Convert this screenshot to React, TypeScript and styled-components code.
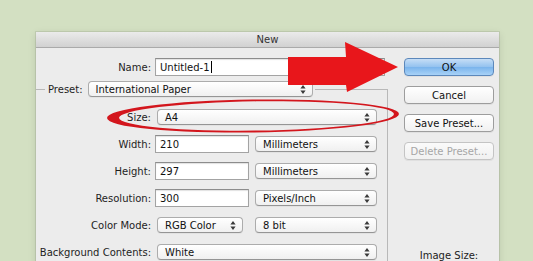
import React from "react";
import styled, { createGlobalStyle } from "styled-components";

const GlobalStyle = createGlobalStyle`
  html, body {
    margin: 0;
    padding: 0;
  }
  body {
    font-family: "DejaVu Sans", "Liberation Sans", sans-serif;
    font-size: 10px;
    color: #1e1e1e;
  }
`;

const Page = styled.div`
  position: relative;
  width: 533px;
  height: 261px;
  overflow: hidden;
  box-sizing: border-box;
  padding: 32px 0 0 36px;
  background: #d3e0c2;
`;

const Dialog = styled.div`
  width: 463px;
  height: 280px;
  background: #ececec;
  box-shadow: 0 0 0 1px rgba(0, 0, 0, 0.08), 0 2px 8px rgba(0, 0, 0, 0.12);
`;

const TitleBar = styled.div`
  box-sizing: border-box;
  height: 16px;
  display: flex;
  align-items: center;
  justify-content: center;
  background: linear-gradient(#ebebeb, #d1d1d1);
  border-bottom: 1px solid #aaaaaa;
  color: #333;
`;

const Body = styled.div`
  display: flex;
  padding-top: 10px;
`;

const FormColumn = styled.div`
  width: 352px;
  display: flex;
  flex-direction: column;
`;

const ButtonColumn = styled.div`
  width: 90px;
  margin-left: 16px;
  display: flex;
  flex-direction: column;
  gap: 10px;
`;

const Row = styled.div`
  display: flex;
  align-items: center;
  gap: 4px;
  height: 18px;
`;

const Label = styled.span`
  width: 115px;
  flex-shrink: 0;
  text-align: right;
  white-space: nowrap;
`;

const TextBox = styled.div<{ $w: number }>`
  box-sizing: border-box;
  width: ${(p) => p.$w}px;
  height: 18px;
  display: flex;
  align-items: center;
  padding-left: 4px;
  background: #fff;
  border: 1px solid #a3a3a3;
  border-top-color: #8c8c8c;
  box-shadow: inset 0 1px 1px rgba(0, 0, 0, 0.12);
  color: #111;
`;

const Caret = styled.span`
  width: 1px;
  height: 12px;
  margin-left: 1px;
  background: #000;
`;

const PopUpBox = styled.div<{ $w: number; $ml: number }>`
  box-sizing: border-box;
  width: ${(p) => p.$w}px;
  margin-left: ${(p) => p.$ml}px;
  height: 16px;
  display: flex;
  align-items: center;
  justify-content: space-between;
  padding: 0 6px 0 7px;
  border: 1px solid #acacac;
  border-bottom-color: #959595;
  border-radius: 4px;
  background: linear-gradient(#ffffff, #f0f0f0);
  box-shadow: 0 1px 0 rgba(0, 0, 0, 0.04);
  color: #111;
  white-space: nowrap;
`;

const Group = styled.fieldset`
  margin: 5px 0 0 0;
  padding: 0 10px 0 0;
  min-width: 0;
  border: 1px solid #b8b8b8;
  border-left: none;
  border-bottom: none;
`;

const GroupLegend = styled.legend`
  margin-left: 9px;
  padding: 0 2px 0 3px;
  display: flex;
  align-items: center;
  gap: 5px;
`;

const Rows = styled.div`
  display: flex;
  flex-direction: column;
  gap: 9px;
  padding-top: 11px;
`;

const Button = styled.div<{ $kind?: "default" | "disabled" }>`
  box-sizing: border-box;
  height: 18px;
  display: flex;
  align-items: center;
  justify-content: center;
  border-radius: 4px;
  border: 1px solid
    ${(p) =>
      p.$kind === "default"
        ? "#5c88bb"
        : p.$kind === "disabled"
        ? "#c4c4c4"
        : "#9d9d9d"};
  background: ${(p) =>
    p.$kind === "default"
      ? "linear-gradient(#c6def6, #93c2ef 50%, #7ab4ec 51%, #a8d2f7)"
      : p.$kind === "disabled"
      ? "linear-gradient(#fafafa, #f1f1f1)"
      : "linear-gradient(#ffffff, #f1f1f1)"};
  color: ${(p) => (p.$kind === "disabled" ? "#a6a6a6" : "#111")};
  box-shadow: 0 1px 0 rgba(0, 0, 0, 0.05);
`;

const SizeInfo = styled.div`
  margin-top: 80px;
  text-align: center;
  color: #222;
`;

const Overlay = styled.svg`
  position: absolute;
  top: 0;
  left: 0;
  pointer-events: none;
`;

const Arrows = () => (
  <svg width="6" height="9" viewBox="0 0 6 9">
    <path d="M3 0L5.6 3.4H0.4Z M3 9L0.4 5.6H5.6Z" fill="#3a3a3a" />
  </svg>
);

const PopUp: React.FC<{ w: number; ml?: number; children?: React.ReactNode }> = ({
  w,
  ml = 0,
  children,
}) => (
  <PopUpBox $w={w} $ml={ml}>
    <span>{children}</span>
    <Arrows />
  </PopUpBox>
);

export default function App() {
  return (
    <>
      <GlobalStyle />
      <Page>
        <Dialog>
          <TitleBar>New</TitleBar>
          <Body>
            <FormColumn>
              <Row>
                <Label>Name:</Label>
                <TextBox $w={230}>
                  Untitled-1
                  <Caret />
                </TextBox>
              </Row>
              <Group>
                <GroupLegend>
                  <span>Preset:</span>
                  <PopUp w={225}>International Paper</PopUp>
                </GroupLegend>
                <Rows>
                  <Row>
                    <Label>Size:</Label>
                    <PopUp w={220} ml={2}>
                      A4
                    </PopUp>
                  </Row>
                  <Row>
                    <Label>Width:</Label>
                    <TextBox $w={94}>210</TextBox>
                    <PopUp w={122} ml={2}>
                      Millimeters
                    </PopUp>
                  </Row>
                  <Row>
                    <Label>Height:</Label>
                    <TextBox $w={94}>297</TextBox>
                    <PopUp w={122} ml={2}>
                      Millimeters
                    </PopUp>
                  </Row>
                  <Row>
                    <Label>Resolution:</Label>
                    <TextBox $w={94}>300</TextBox>
                    <PopUp w={122} ml={2}>
                      Pixels/Inch
                    </PopUp>
                  </Row>
                  <Row>
                    <Label>Color Mode:</Label>
                    <PopUp w={86} ml={2}>
                      RGB Color
                    </PopUp>
                    <PopUp w={122} ml={8}>
                      8 bit
                    </PopUp>
                  </Row>
                  <Row>
                    <Label>Background Contents:</Label>
                    <PopUp w={220} ml={2}>
                      White
                    </PopUp>
                  </Row>
                </Rows>
              </Group>
            </FormColumn>
            <ButtonColumn>
              <Button $kind="default">OK</Button>
              <Button>Cancel</Button>
              <Button>Save Preset...</Button>
              <Button $kind="disabled">Delete Preset...</Button>
              <SizeInfo>Image Size:</SizeInfo>
            </ButtonColumn>
          </Body>
        </Dialog>
        <Overlay width="533" height="261" viewBox="0 0 533 261">
          <path
            fillRule="evenodd"
            fill="#d3161d"
            transform="rotate(-0.8 253 116)"
            d="M107 116 A146 16.5 0 1 0 399 116 A146 16.5 0 1 0 107 116 Z M119 116 A137.5 14.6 0 1 0 394 116 A137.5 14.6 0 1 0 119 116 Z"
          />
          <polygon
            points="288,57 346,57 345,42 398,67 347,92 346,85 288,85"
            fill="#e8161b"
          />
        </Overlay>
      </Page>
    </>
  );
}
